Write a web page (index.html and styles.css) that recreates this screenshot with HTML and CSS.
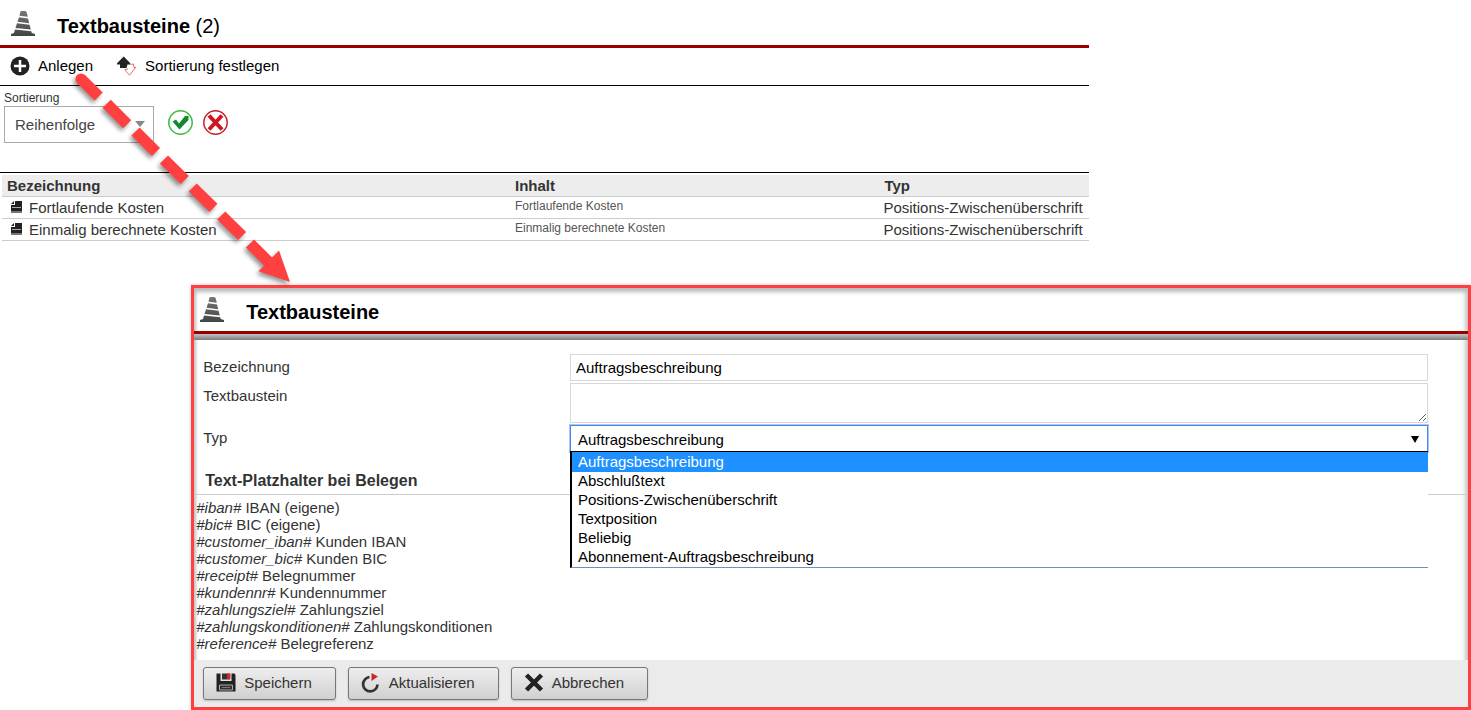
FILE: index.html
```html
<!DOCTYPE html>
<html lang="de">
<head>
<meta charset="utf-8">
<title>Textbausteine</title>
<link rel="stylesheet" href="styles.css">
</head>
<body>
<svg class="defs" width="0" height="0" aria-hidden="true">
  <defs>
    <linearGradient id="cone-fill" x1="0" y1="0" x2="0" y2="1">
      <stop offset="0" stop-color="#777"/><stop offset="1" stop-color="#444"/>
    </linearGradient>
    <symbol id="cone" viewBox="0 0 24 25">
      <path fill="url(#cone-fill)" d="M10 0h4.500l1.200 1.200 1.100 4.500-8.300-1L9.300 1zM8 6.200l9 1.300 1.200 4.700L6.500 10.800zM6 12.200l12.500 1.600 1.300 4.700L4.500 17zM4 18.500l16.300 1.800.5 1.700 3.200 1v2H0v-2l3-1z"/>
    </symbol>
    <symbol id="doc" viewBox="0 0 11 13">
      <path fill="#222" d="M4 0h7v12H0V4h4z"/>
      <path fill="#222" d="M0 3l3-3v3z"/>
      <path stroke="#aaa" d="M1 6.500h9"/>
      <path fill="#777" d="M0 10h11v2H0z"/>
    </symbol>
  </defs>
</svg>
<main class="page">
  <section class="list">
    <header class="titlebar">
      <svg class="cone"><use href="#cone"/></svg>
      <h1 class="title">Textbausteine <span class="count">(2)</span></h1>
    </header>
    <nav class="toolbar">
      <button class="tool" type="button">
        <svg width="20" height="20" viewBox="0 0 20 20"><circle cx="10" cy="10" r="9.500" fill="#222"/><path d="M10 4v12M4 10h12" stroke="#fff" stroke-width="2.500"/></svg>
        <span>Anlegen</span>
      </button>
      <button class="tool" type="button">
        <svg width="20" height="20" viewBox="0 0 20 20"><path d="M6.700 0.500L0 7.200V8.500h3V12h6.500l1-3.500h2.800V7.200z" fill="#222"/><path d="M13.500 8.500l3-.5.5 3.500 2-.3-6.500 8-4.800-5.500 3.300-.7" fill="none" stroke="#e07468"/></svg>
        <span>Sortierung festlegen</span>
      </button>
    </nav>
    <form class="filter">
      <div class="filter-field">
        <label class="filter-label" for="sort">Sortierung</label>
        <div class="select-wrap">
          <select class="sort-select" id="sort"><option>Reihenfolge</option></select>
          <svg class="sort-caret" width="10" height="6" viewBox="0 0 10 6"><path d="M0 0h10L5 6z" fill="#888"/></svg>
        </div>
      </div>
      <button class="round" type="button" aria-label="Anwenden">
        <svg width="25" height="25" viewBox="0 0 25 25"><circle cx="12.500" cy="12.500" r="11.700" fill="#fff" stroke="#3dbb3d" stroke-width="1.500"/><path d="M4.500 11.500L8 9.500l3 4 6-7.500h3.500v4L11.500 19.500z" fill="#128a35"/></svg>
      </button>
      <button class="round" type="button" aria-label="Verwerfen">
        <svg width="25" height="25" viewBox="0 0 25 25"><circle cx="12.500" cy="12.500" r="11.700" fill="#fff" stroke="#c4222b" stroke-width="1.500"/><path d="M6 5.500l13 14M19 5.500l-13 14" stroke="#cf1520" stroke-width="4"/></svg>
      </button>
    </form>
    <div class="table-area">
      <table class="table">
        <thead>
          <tr><th class="col-name">Bezeichnung</th><th class="col-text">Inhalt</th><th>Typ</th></tr>
        </thead>
        <tbody>
          <tr><td><span class="name"><svg class="doc"><use href="#doc"/></svg>Fortlaufende Kosten</span></td><td class="small">Fortlaufende Kosten</td><td class="type">Positions-Zwischenüberschrift</td></tr>
          <tr><td><span class="name"><svg class="doc"><use href="#doc"/></svg>Einmalig berechnete Kosten</span></td><td class="small">Einmalig berechnete Kosten</td><td class="type">Positions-Zwischenüberschrift</td></tr>
        </tbody>
      </table>
    </div>
  </section>

  <section class="panel">
    <header class="titlebar panel-title">
      <svg class="cone"><use href="#cone"/></svg>
      <h2 class="title">Textbausteine</h2>
    </header>
    <div class="shade"></div>
    <form class="form">
      <label for="name">Bezeichnung</label>
      <input class="field" id="name" type="text" value="Auftragsbeschreibung">
      <label for="text">Textbaustein</label>
      <textarea class="field area" id="text"></textarea>
      <label for="type">Typ</label>
      <div class="select-wrap">
        <select class="type-select" id="type"><option>Auftragsbeschreibung</option></select>
        <svg class="type-caret" width="8" height="7" viewBox="0 0 8 7"><path d="M0 0h8L4 7z" fill="#000"/></svg>
        <ul class="options" role="listbox" aria-label="Typ">
          <li class="option selected" role="option" aria-selected="true">Auftragsbeschreibung</li>
          <li class="option" role="option">Abschlußtext</li>
          <li class="option" role="option">Positions-Zwischenüberschrift</li>
          <li class="option" role="option">Textposition</li>
          <li class="option" role="option">Beliebig</li>
          <li class="option" role="option">Abonnement-Auftragsbeschreibung</li>
        </ul>
      </div>
    </form>
    <h3 class="subhead">Text-Platzhalter bei Belegen</h3>
    <ul class="placeholders">
      <li><i>#iban#</i> IBAN (eigene)</li>
      <li><i>#bic#</i> BIC (eigene)</li>
      <li><i>#customer_iban#</i> Kunden IBAN</li>
      <li><i>#customer_bic#</i> Kunden BIC</li>
      <li><i>#receipt#</i> Belegnummer</li>
      <li><i>#kundennr#</i> Kundennummer</li>
      <li><i>#zahlungsziel#</i> Zahlungsziel</li>
      <li><i>#zahlungskonditionen#</i> Zahlungskonditionen</li>
      <li><i>#reference#</i> Belegreferenz</li>
    </ul>
    <footer class="actions">
      <button class="action" type="button">
        <svg width="20" height="20" viewBox="0 0 20 20"><path d="M0.500 0.500h4v7.500h11V0.500h3l1 1.500V18.500H0.500z" fill="#222"/><path d="M6 0.500h8v6H6z" fill="#333"/><path d="M11 0.500h3.500v5.500h-3.500z" fill="#d02a2a"/><path d="M3.500 12h13v5h-13z" fill="#333" stroke="#aaa"/><path d="M6 14.500h8" stroke="#777"/></svg>
        <span>Speichern</span>
      </button>
      <button class="action" type="button">
        <svg width="20" height="20" viewBox="0 0 20 20"><path d="M8.500 4a7.200 7.200 0 1 0 8 7.500" fill="none" stroke="#333" stroke-width="2.700"/><path d="M10.500 0l6.500 3.500L10.500 8z" fill="#c8282d"/></svg>
        <span>Aktualisieren</span>
      </button>
      <button class="action" type="button">
        <svg width="20" height="20" viewBox="0 0 20 20"><path d="M2.500 2l15 15M17.500 2l-15 15" stroke="#222" stroke-width="4.500"/></svg>
        <span>Abbrechen</span>
      </button>
    </footer>
  </section>

  <svg class="pointer" width="310" height="300" viewBox="0 0 310 300" aria-hidden="true">
    <circle cx="81" cy="79" r="5.500" fill="#ff4040"/>
    <path d="M81 79l17.700 17.500M106.700 103.700l20.500 20.500M135.500 131.500l20.500 20.500M164 159.500l20.800 20.500M192.700 187.500l20.800 20.300M221.300 215.500l20.800 20.500M250 243.500l22 22" stroke="#ff4040" stroke-width="11.500"/>
    <path d="M279 250.500L290 282l-31.500-10.700z" fill="#ff4040"/>
  </svg>
</main>
</body>
</html>
```
FILE: styles.css
```css
* { box-sizing: border-box; }
body {
  margin: 0;
  background: #fff;
  color: #333;
  font-family: "Liberation Sans", Arial, sans-serif;
  font-size: 15px;
  line-height: 17px;
}
button, input, select, textarea { font: inherit; color: inherit; }
h1, h2, h3, ul { margin: 0; padding: 0; }
ul { list-style: none; }
svg { display: block; flex: none; }
.defs { position: absolute; }
.page { position: relative; overflow: hidden; }

.list { width: 74%; }
.titlebar {
  display: flex;
  align-items: flex-start;
  gap: 22px;
  height: 48px;
  padding: 11px 11px 0;
  border-bottom: 3px solid #980000;
}
.cone { width: 24px; height: 25px; }
.title { padding-top: 3px; color: #000; font-size: 20px; line-height: 24px; }
.count { font-weight: 400; }

.toolbar {
  display: flex;
  align-items: center;
  gap: 24px;
  height: 38px;
  padding: 0 10px 2px;
  border-bottom: 1px solid #000;
}
.tool {
  display: flex;
  align-items: center;
  gap: 8px;
  padding: 0;
  border: 0;
  background: none;
  color: #000;
}

.filter {
  display: flex;
  align-items: flex-end;
  gap: 10px;
  padding: 5px 4px 29px;
}
.filter-field { margin-right: 4px; }
.filter-label { display: block; font-size: 12px; line-height: 15px; }
.select-wrap { position: relative; }
.sort-select {
  display: block;
  width: 150px;
  height: 37px;
  padding: 0 10px;
  border: 1px solid #aaa;
  border-radius: 0;
  background: #fff;
  color: #444;
  appearance: none;
}
.sort-caret { position: absolute; right: 9px; top: 15px; }
.round { margin-bottom: 8px; padding: 0; border: 0; background: none; }

.table-area { padding: 2px 0 0 2px; border-top: 1px solid #000; }
.table { width: 100%; border-collapse: separate; border-spacing: 0; table-layout: fixed; }
.table th, .table td {
  height: 22px;
  padding: 0 5px 1px;
  border-bottom: 1px solid #ccc;
  text-align: left;
  white-space: nowrap;
}
.table th { background: #ededed; }
.col-name { width: 508px; }
.col-text { width: 34%; }
.name { display: flex; align-items: center; gap: 7px; padding-left: 4px; }
.doc { width: 11px; height: 13px; }
.table .small { padding-bottom: 3px; color: #555; font-size: 12px; line-height: 15px; }
.table .type { padding-left: 4px; }

.panel {
  margin: 44px 0 0 13%;
  border: 3px solid #ff4040;
  box-shadow: inset 0 4px 4px #bbb, inset -3px 0 4px #ccc, inset 2px 0 3px #ccc, 0 0 4px #ccc;
}
.panel-title { height: 46px; padding: 9px 6px 0; }
.shade { height: 6px; background: linear-gradient(#c4c4c4, #7c7c7c); }
.form {
  display: grid;
  grid-template-columns: 3fr 7fr;
  row-gap: 2px;
  padding: 14px 40px 17px 8px;
}
.form label { padding: 4px 1px 0; }
.field {
  display: block;
  width: 100%;
  height: 27px;
  padding: 0 5px;
  border: 1px solid #d8d8d8;
  background: #fff;
  color: #000;
  outline: 0;
}
.area { height: 40px; resize: vertical; }
.type-select {
  display: block;
  width: 100%;
  height: 27px;
  padding: 2px 7px 0;
  border: 1px solid #4a86e8;
  border-radius: 0;
  box-shadow: 0 0 0 1px #a9c6f7;
  background: #fff;
  color: #000;
  appearance: none;
}
.type-caret { position: absolute; right: 9px; top: 11px; }
.options {
  position: absolute;
  z-index: 1;
  top: 26px;
  left: 0;
  right: 0;
  border: solid #000;
  border-width: 1px 0 0 2px;
  border-bottom: 1px solid #6a92c8;
  background: #fff;
  color: #000;
}
.option { padding: 0 6px 2px; }
.option.selected { padding: 1px 6px 2px; background: #1e90ff; color: #fff; }
.subhead {
  padding: 3px 11px 5px;
  border-bottom: 1px solid #ccc;
  font-size: 16px;
  line-height: 17px;
}
.placeholders { padding: 4px 2px 8px; }
.actions {
  display: flex;
  gap: 12px;
  padding: 7px 9px;
  background: #ebebeb;
}
.action {
  display: flex;
  align-items: center;
  gap: 8px;
  height: 33px;
  padding: 0 23px 2px 12px;
  border: 1px solid #777;
  border-radius: 3px;
  background: linear-gradient(#eee, #d0d0d0);
  box-shadow: 0 1px 2px #bbb;
}
.pointer {
  position: absolute;
  z-index: 2;
  top: 0;
  left: 0;
  pointer-events: none;
  filter: drop-shadow(-2px 3px 2px rgba(0, 0, 0, 0.4));
}
```
